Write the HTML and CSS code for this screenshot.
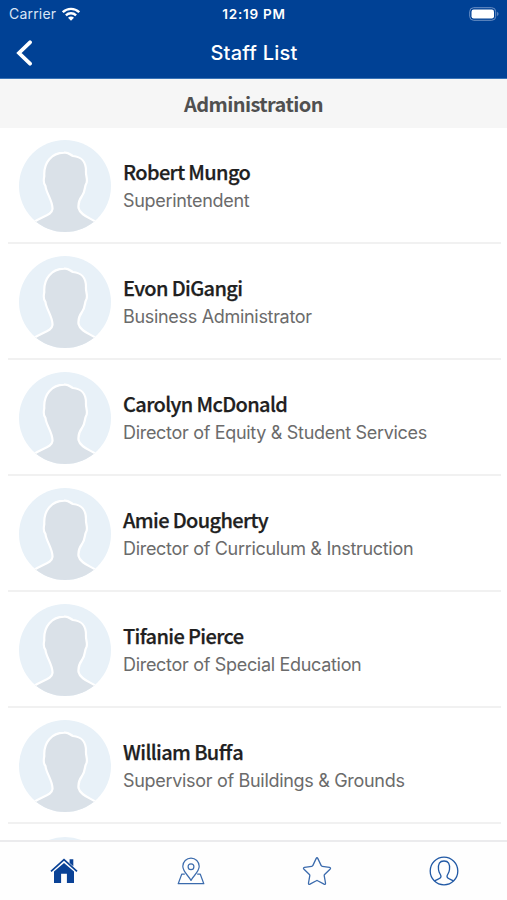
FILE: index.html
```html
<!DOCTYPE html>
<html lang="en">
<head>
<meta charset="utf-8">
<title>Staff List</title>
<link rel="stylesheet" href="styles.css">
</head>
<body>
<svg class="defs" width="0" height="0" aria-hidden="true">
  <defs>
    <clipPath id="round"><circle cx="46" cy="46" r="46"/></clipPath>
    <symbol id="avatar" viewBox="0 0 92 92">
      <g clip-path="url(#round)">
        <rect width="92" height="92" fill="#e8f1f8"/>
        <path d="M15 82C24 76 33 75 33.500 69C34 61 27 53 26.500 46C24.500 44 24.500 40 25.300 36C24.500 22 33 13 45 12.700C50 12 51 15 54 16C62 16.500 67 22 67 31C66.500 36 69 39 67.500 43C65 47 67 50 63 56C60 60 59 63 59.500 68C61 75 71 78 77 82V100H15Z" fill="#dae1e8" stroke="#fff" stroke-width="2.200" stroke-linejoin="round"/>
      </g>
    </symbol>
  </defs>
</svg>
<div class="app">
  <header class="top">
    <div class="status">
      <div class="carrier"><span>Carrier</span>
        <svg width="18" height="14" viewBox="0 0 18 14"><g fill="none" stroke="#fff" stroke-width="2.400"><path d="M.8 5.200C5.400.7 12.600.7 17.200 5.200"/><path d="M3.900 8.300C6.800 5.500 11.200 5.500 14.100 8.300"/></g><path d="M9 13.700L6 10.700C7.700 9.100 10.300 9.100 12 10.700Z" fill="#fff"/></svg>
      </div>
      <div class="time">12:19 PM</div>
      <svg class="battery" width="30" height="14" viewBox="0 0 30 14"><rect x=".7" y=".7" width="26" height="12.600" rx="4" fill="none" stroke="#6d91c5" stroke-width="1"/><rect x="2.500" y="2.500" width="22.500" height="9" rx="2.200" fill="#fff"/><path d="M28.200 4.800Q30.800 7 28.200 9.200Z" fill="#6d91c5"/></svg>
    </div>
    <div class="nav">
      <svg class="back" width="16" height="26" viewBox="0 0 16 26"><path d="M14 2.300L3 13L14 23.700" fill="none" stroke="#fff" stroke-width="3.800" stroke-linecap="round" stroke-linejoin="miter"/></svg>
      <h1>Staff List</h1>
    </div>
  </header>
  <h2>Administration</h2>
  <main class="list">
    <article class="row"><svg class="avatar"><use href="#avatar"/></svg><div><h3>Robert Mungo</h3><p>Superintendent</p></div></article>
    <article class="row"><svg class="avatar"><use href="#avatar"/></svg><div><h3>Evon DiGangi</h3><p>Business Administrator</p></div></article>
    <article class="row"><svg class="avatar"><use href="#avatar"/></svg><div><h3>Carolyn McDonald</h3><p>Director of Equity &amp; Student Services</p></div></article>
    <article class="row"><svg class="avatar"><use href="#avatar"/></svg><div><h3>Amie Dougherty</h3><p>Director of Curriculum &amp; Instruction</p></div></article>
    <article class="row"><svg class="avatar"><use href="#avatar"/></svg><div><h3>Tifanie Pierce</h3><p>Director of Special Education</p></div></article>
    <article class="row"><svg class="avatar"><use href="#avatar"/></svg><div><h3>William Bu<span class="lig">ff</span>a</h3><p>Supervisor of Buildings &amp; Grounds</p></div></article>
    <article class="row"><svg class="avatar"><use href="#avatar"/></svg></article>
  </main>
  <nav class="tabs">
    <svg viewBox="0 0 30 30"><g fill="#0a4296"><path d="M15 6.900L25 15.400V27H17.900V17.800H12.100V27H5V15.400Z"/><path d="M20.600 3.200H24.300V10.200L20.600 7Z"/></g><path d="M2 15.400L15 3.600L28 15.400" fill="none" stroke="#0a4296" stroke-width="1.700"/></svg>
    <svg viewBox="0 0 30 30"><g fill="none" stroke="#3b6bad" stroke-width="1.200" stroke-linejoin="round"><path d="M15 24.500C13 20 6.800 16 6.800 10.300A8.200 8.200 0 0 1 23.200 10.300C23.200 16 17 20 15 24.500Z"/><circle cx="15" cy="10.700" r="2.900"/><path d="M8.800 18.200H5.700L2.200 27.700H27.800L24.300 18.200H21.200"/></g></svg>
    <svg viewBox="0 0 30 30"><path d="M14.100 2.600Q15 .9 15.900 2.600L19.200 9.600Q19.500 10.300 20.300 10.400L27.500 11.400Q29.300 11.800 28 13.200L22.600 18.500Q22.100 19 22.200 19.700L23.500 27Q23.700 28.900 22 28.100L15.700 24.700Q15 24.300 14.300 24.700L8 28.100Q6.300 28.900 6.500 27L7.800 19.700Q7.900 19 7.400 18.500L2 13.200Q.7 11.800 2.500 11.400L9.700 10.400Q10.500 10.300 10.800 9.600Z" fill="none" stroke="#3b6bad" stroke-width="1.300"/></svg>
    <svg viewBox="0 0 30 30"><g fill="none" stroke="#2159a5" stroke-width="1.300" stroke-linejoin="round"><circle cx="15" cy="15" r="13.800"/><path d="M5.500 25C8 23.400 12 22.800 12 20.500C12 18.700 9.800 17 9.500 13.500C9 7.800 10.500 5 15 5C19.500 5 21 7.800 20.500 13.500C20.200 17 18 18.700 18 20.500C18 22.800 22 23.400 24.500 25"/></g></svg>
  </nav>
</div>
</body>
</html>
```
FILE: styles.css
```css
* { box-sizing: border-box; }
body, h1, h2, h3, p { margin: 0; }
body { font-family: Inter, "Liberation Sans", sans-serif; background: #fff; }
.defs { position: absolute; }
.app { width: 507px; height: 900px; overflow: hidden; display: flex; flex-direction: column; }
.top { flex: 0 0 79px; background: #004195; color: #fff; border-bottom: 1px solid #3973b6; }
.status { height: 27px; padding: 0 8px 0 9px; display: grid; grid-template-columns: 1fr auto 1fr; align-items: center; }
.carrier { display: flex; align-items: center; gap: 6px; font-size: 14px; letter-spacing: 0.2px; color: #d9e5f5; }
.time { font-size: 13.5px; font-weight: 600; letter-spacing: 0.75px; }
.battery { justify-self: end; }
.nav { height: 51px; padding: 0 15px 0 16px; display: grid; grid-template-columns: 1fr auto 1fr; align-items: center; }
h1 { font-size: 20px; font-weight: 500; letter-spacing: 0.22px; line-height: 24px; }
h2 { flex: 0 0 49px; background: #f6f6f6; color: #505050; text-align: center; font: 700 20px/49px "Noto Sans CJK SC", sans-serif; letter-spacing: -0.6px; }
.list { flex: 1; min-height: 0; overflow: hidden; padding: 0 6px 0 8px; }
.row { height: 116px; padding: 2px 0 0 11px; display: flex; align-items: center; gap: 12px; border-bottom: 2px solid #f1f1f1; }
.row:last-child { border: 0; }
.avatar { width: 92px; height: 92px; flex: none; }
h3 { color: #202020; font: 500 20px/28px "Noto Sans CJK SC", sans-serif; letter-spacing: -0.63px; -webkit-text-stroke: 0.25px #202020; }
.lig { letter-spacing: 0; }
p { color: #6b6b6b; font-size: 18px; line-height: 26px; letter-spacing: -0.31px; padding-top: 2px; margin-bottom: 1px; }
.tabs { flex: 0 0 60px; padding-left: 1px; border-top: 2px solid #ebebed; background: #fefefe; display: grid; grid-template-columns: repeat(4, 1fr); justify-items: center; align-items: center; }
.tabs svg { width: 30px; height: 30px; }
```
